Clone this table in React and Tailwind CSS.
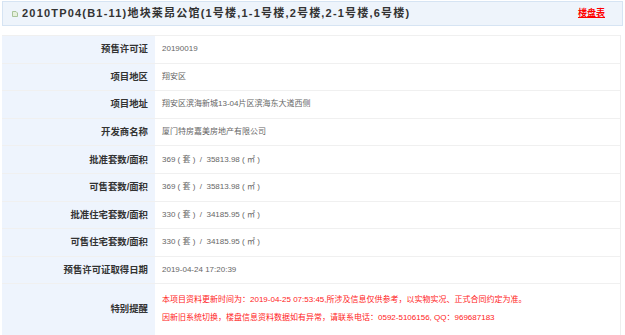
const ROWS = [
    { label: "预售许可证", value: "20190019" },
    { label: "项目地区", value: "翔安区" },
    { label: "项目地址", value: "翔安区滨海新城13-04片区滨海东大道西侧" },
    { label: "开发商名称", value: "厦门特房嘉美房地产有限公司" },
    { label: "批准套数/面积", value: "369 ( 套 )  /  35813.98 ( ㎡ )" },
    { label: "可售套数/面积", value: "369 ( 套 )  /  35813.98 ( ㎡ )" },
    { label: "批准住宅套数/面积", value: "330 ( 套 )  /  34185.95 ( ㎡ )" },
    { label: "可售住宅套数/面积", value: "330 ( 套 )  /  34185.95 ( ㎡ )" },
    { label: "预售许可证取得日期", value: "2019-04-24 17:20:39" }
];

const font = { fontFamily: '"Liberation Sans", "Noto Sans CJK SC", sans-serif' };

const App = () => {
    return (
        <div className="w-[625px] h-[335px] overflow-hidden bg-white px-[2px] pt-[1px]" style={font}>
            {/* Title bar */}
            <div className="h-[25px] flex items-center justify-between bg-[#eef4fb] border border-[#d6e4f3] pl-[9px] pr-[17px]">
                <div className="flex items-center gap-[4px]">
                    <svg width="6" height="6" viewBox="0 0 6 6">
                        <path d="M0.5 0.5 H4 L5.5 2 V5.5 H0.5 Z" fill="#e6f0dc" stroke="#a9c49a" strokeWidth="1" />
                    </svg>
                    <span className="text-[11px] font-bold text-[#333] tracking-[1.2px]">
                        2010TP04(B1-11)地块莱昂公馆(1号楼,1-1号楼,2号楼,2-1号楼,6号楼)
                    </span>
                </div>
                <a href="#" className="text-[9px] font-bold text-[#f00] underline">楼盘表</a>
            </div>

            {/* Info table */}
            <div className="mt-[9px] mr-[2px] border-r border-[#eeeeee]">
                {ROWS.map((row) => (
                    <div key={row.label} className="flex h-[27.6px] border-t border-[#f0f0f0]">
                        <div className="w-[153px] shrink-0 bg-[#eef4fd] flex items-center justify-end pr-[7px] text-[9.4px] font-bold text-[#333]">
                            {row.label}
                        </div>
                        <div className="flex-1 flex items-center pl-[7px] text-[8px] text-[#666] whitespace-pre">
                            {row.value}
                        </div>
                    </div>
                ))}
                <div className="flex h-[52px] border-t border-[#f0f0f0]">
                    <div className="w-[153px] shrink-0 bg-[#eef4fd] flex items-center justify-end pr-[7px] pb-[2px] text-[9.4px] font-bold text-[#333]">
                        特别提醒
                    </div>
                    <div className="flex-1 flex flex-col pl-[7px] pt-[11px] gap-[9px] text-[8px] leading-[9px] text-[#f22]">
                        <div>本项目资料更新时间为：2019-04-25 07:53:45,所涉及信息仅供参考，以实物实况、正式合同约定为准。</div>
                        <div>因新旧系统切换，楼盘信息资料数据如有异常，请联系电话：0592-5106156, QQ：969687183</div>
                    </div>
                </div>
            </div>
        </div>
    );
};

export default App;
